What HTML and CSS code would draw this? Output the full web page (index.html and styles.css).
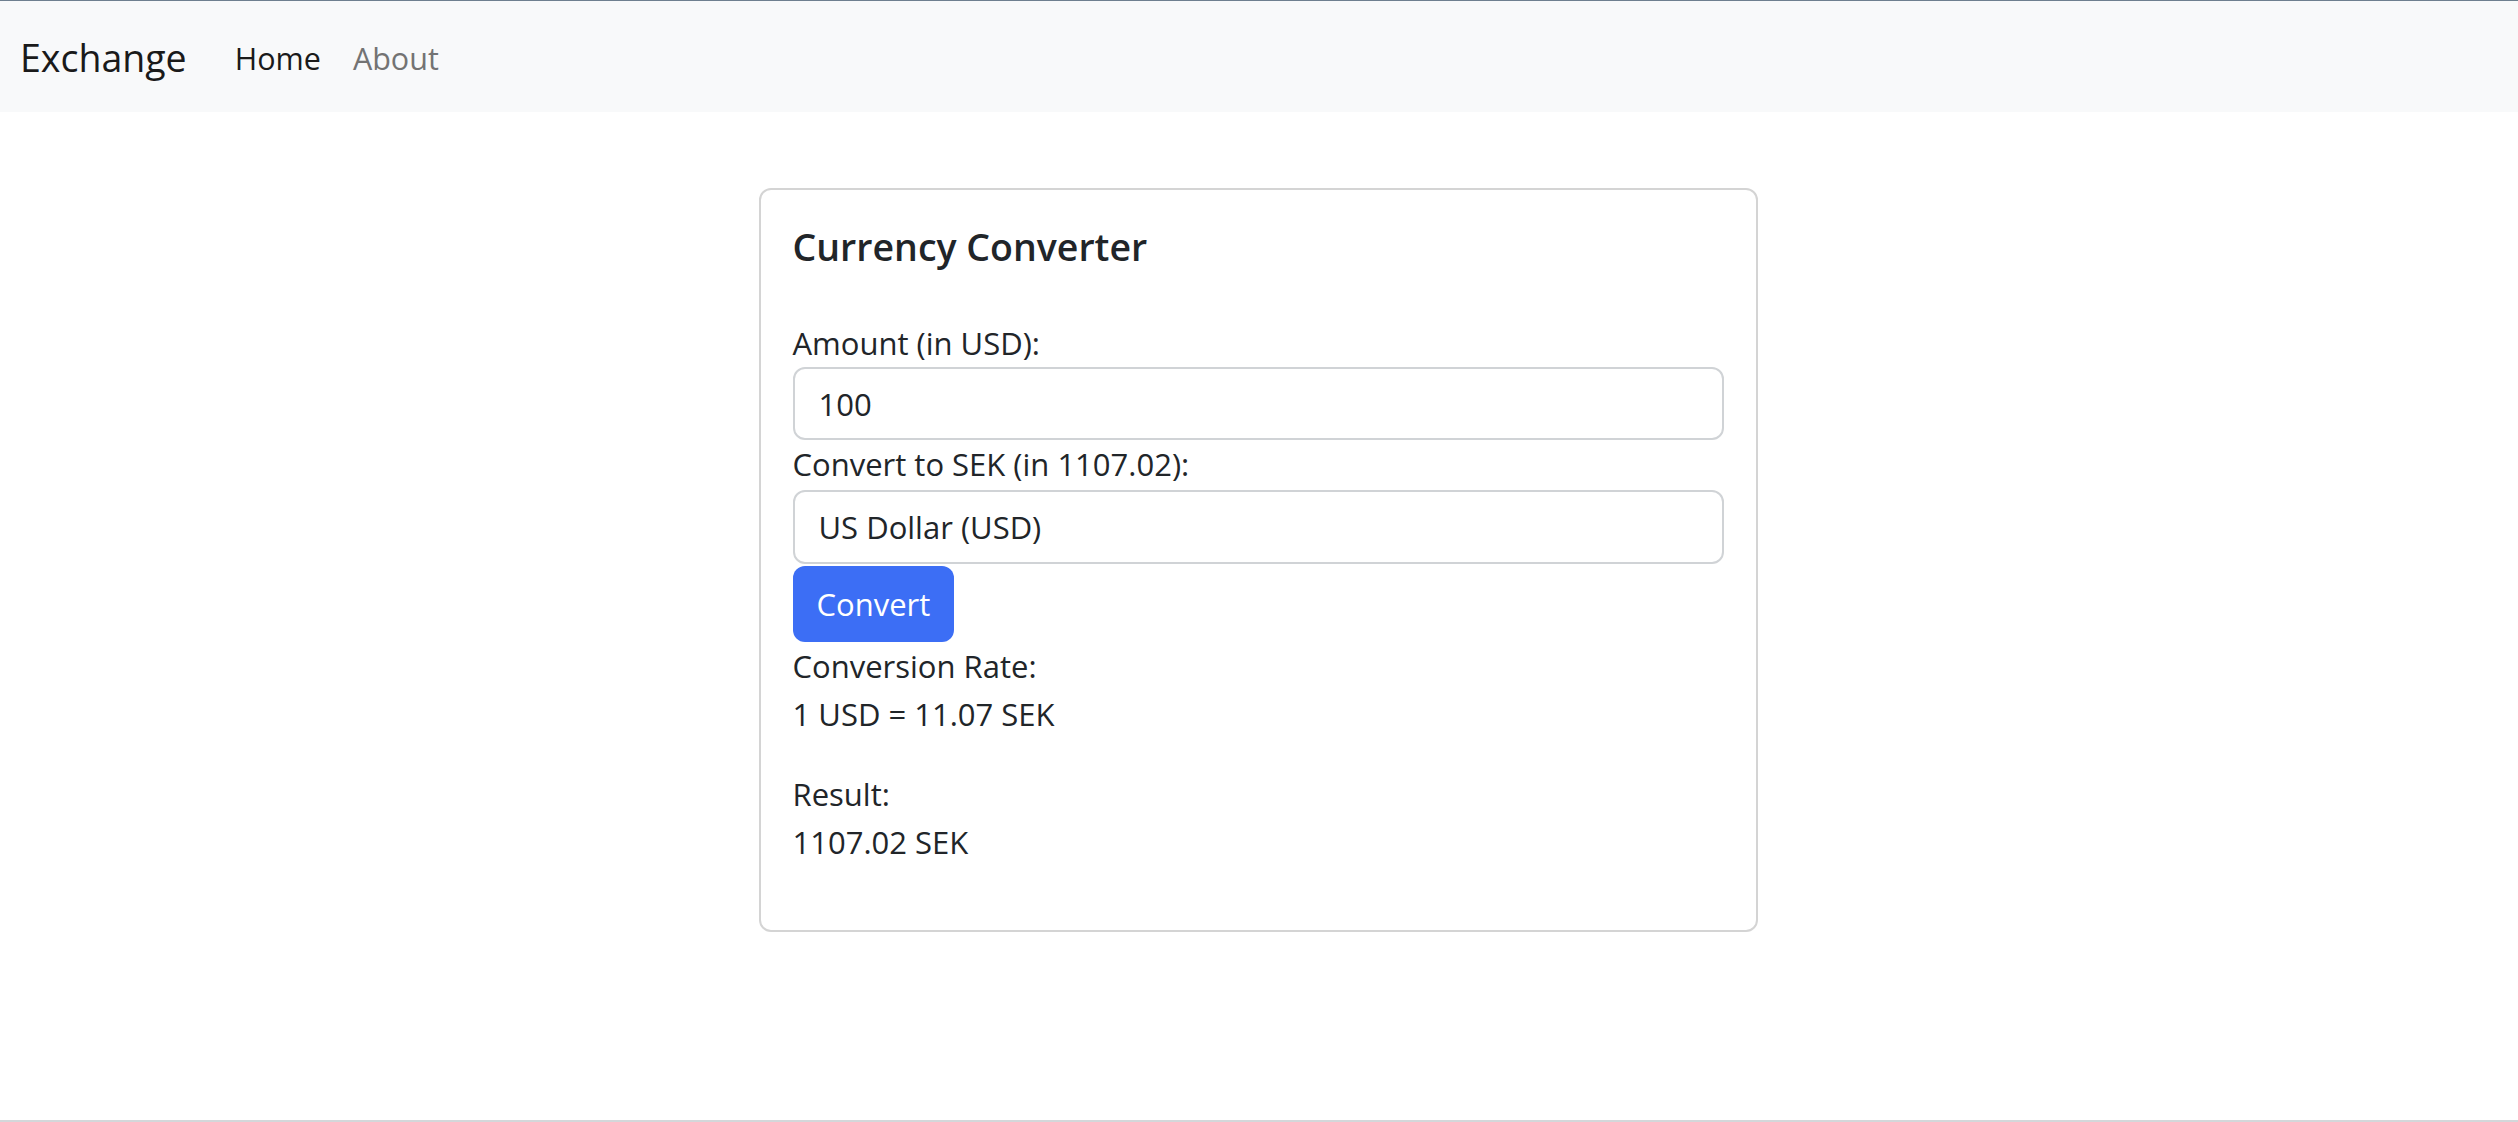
FILE: index.html
```html
<!DOCTYPE html>
<html lang="en">
<head>
<meta charset="utf-8">
<title>Exchange</title>
<link rel="stylesheet" href="styles.css">
</head>
<body>
<div class="page">
  <nav class="navbar">
    <a class="brand" href="#">Exchange</a>
    <a class="nav-link active" href="#">Home</a>
    <a class="nav-link" href="#">About</a>
  </nav>
  <main class="main">
    <div class="card">
      <h5 class="card-title">Currency Converter</h5>
      <form class="form">
        <label class="label" for="amount">Amount (in USD):</label>
        <input class="control" id="amount" type="text" value="100">
        <label class="label" for="currency">Convert to SEK (in 1107.02):</label>
        <select class="control select" id="currency">
          <option>US Dollar (USD)</option>
        </select>
        <div class="actions"><button class="btn" type="button">Convert</button></div>
      </form>
      <p class="info">Conversion Rate:<br>1 USD = 11.07 SEK</p>
      <p class="info">Result:<br>1107.02 SEK</p>
    </div>
  </main>
  <div class="bottom-edge"></div>
</div>
</body>
</html>
```
FILE: styles.css
```css
* { box-sizing: border-box; }
html, body { margin: 0; padding: 0; }
body {
  font-family: "Open Sans", "Noto Sans", sans-serif;
  font-size: 31px;
  line-height: 48px;
  color: #212529;
  background: #ffffff;
}
.page {
  min-height: 100vh;
  display: flex;
  flex-direction: column;
}
.navbar {
  height: 112px;
  border-top: 1px solid #6e7f8f;
  background: #f8f9fa;
  display: flex;
  align-items: center;
  padding: 2px 0 0 20px;
}
.brand {
  font-size: 37.5px;
  line-height: 60px;
  color: #1a1a1a;
  text-decoration: none;
  margin-right: 32px;
}
.nav-link {
  font-size: 30.5px;
  line-height: 48px;
  padding: 0 16px;
  color: #737373;
  text-decoration: none;
}
.nav-link.active { color: #1a1a1a; }
.main {
  flex: 1;
  display: flex;
  justify-content: center;
  align-items: flex-start;
  padding-top: 76px;
}
.card {
  width: 999px;
  margin-right: 2px;
  border: 2px solid #d4d4d4;
  border-radius: 12px;
  padding: 32px;
}
.card-title {
  margin: 0 0 48px 0;
  padding-top: 1px;
  font-size: 37.5px;
  line-height: 48px;
  font-weight: 600;
  color: #212529;
}
.form { display: flex; flex-direction: column; }
.label { display: block; }
.control {
  display: block;
  width: 100%;
  height: 73px;
  margin: 0;
  padding: 0 24px;
  font-family: inherit;
  font-size: 31px;
  color: #212529;
  background: #ffffff;
  border: 2px solid #d0d3d6;
  border-radius: 12px;
  outline: none;
}
.select {
  -webkit-appearance: none;
  appearance: none;
  height: 74px;
  margin-top: 2px;
}
.actions { margin-top: 2px; display: flex; }
.btn {
  height: 76px;
  padding: 0 24px;
  font-family: inherit;
  font-size: 31px;
  color: #ffffff;
  background: #3c6ef5;
  border: none;
  border-radius: 12px;
}
.info { margin: 0 0 32px 0; }
.bottom-edge {
  height: 2px;
  background: #d4d7da;
}
```
